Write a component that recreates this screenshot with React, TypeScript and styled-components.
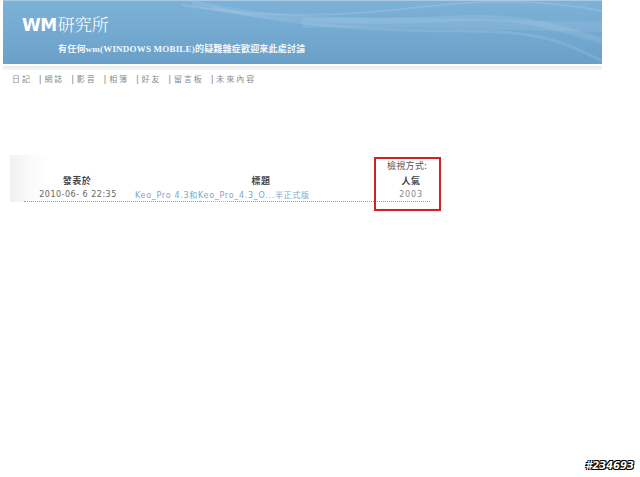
import * as React from 'react';
import styled, { createGlobalStyle } from 'styled-components';

const GlobalStyle = createGlobalStyle`
    html, body {
        margin: 0;
        padding: 0;
        background: #ffffff;
    }
    body {
        font-family: "DejaVu Sans", "Noto Sans CJK TC", sans-serif;
    }
`;

const Page = styled.div`
    position: relative;
    width: 640px;
    height: 477px;
    overflow: hidden;
    background: #ffffff;
`;

const Banner = styled.div`
    position: relative;
    margin-left: 3px;
    width: 599px;
    height: 63px;
    border-top: 1px solid #a9c9e2;
    background: linear-gradient(180deg, #7db2d8 0%, #74a9d0 50%, #6a9fc8 100%);
    overflow: hidden;
`;

const Waves = styled.svg`
    position: absolute;
    right: 0;
    top: 0;
`;

const BannerText = styled.div`
    position: relative;
    padding: 10px 0 0 19px;
    color: #ffffff;
`;

const Logo = styled.div`
    display: flex;
    align-items: baseline;
    height: 22px;
`;

const LogoMark = styled.span`
    font-family: "DejaVu Sans", sans-serif;
    font-weight: 900;
    font-size: 17px;
    letter-spacing: -0.5px;
`;

const LogoName = styled.span`
    font-family: "Noto Serif CJK TC", "Noto Sans CJK TC", serif;
    font-weight: 300;
    font-size: 17px;
    margin-left: 1px;
`;

const Slogan = styled.div`
    margin: 9px 0 0 36px;
    font-family: "Liberation Serif", "Noto Sans CJK TC", serif;
    font-weight: bold;
    font-size: 9px;
    letter-spacing: 0.2px;
    color: #f4f8fc;
`;

const Shade = styled.div`
    margin: 2px 0 0 3px;
    width: 599px;
    height: 4px;
    background: linear-gradient(180deg, #e6e8ea, #f8f8f8);
`;

const Nav = styled.nav`
    display: flex;
    padding: 3px 0 0 12px;
    font-family: "Noto Sans CJK TC", sans-serif;
    font-size: 8px;
    letter-spacing: 2px;
    color: #8a8a8a;
`;

const NavItem = styled.span<{ $first?: boolean }>`
    margin-right: 7px;
    &::before {
        content: ${p => (p.$first ? 'none' : '"|"')};
        margin-right: 1px;
        color: #888;
        font-weight: bold;
    }
`;

const Board = styled.div`
    position: relative;
    margin: 71px 0 0 10px;
    width: 430px;
    height: 47px;
    background: linear-gradient(90deg, #f1f1f1 0px, #fafafa 20px, #ffffff 40px);
`;

const ViewMode = styled.div`
    position: absolute;
    left: 377px;
    top: 4px;
    font-family: "Noto Sans CJK TC", sans-serif;
    font-size: 9px;
    letter-spacing: 0.3px;
    color: #555;
`;

const Rows = styled.div`
    position: absolute;
    left: 14px;
    top: 18px;
    width: 406px;
`;

const Row = styled.div<{ $line?: boolean }>`
    display: grid;
    grid-template-columns: 106px 262px 38px;
    height: 14px;
    align-items: center;
    border-bottom: ${p => (p.$line ? '1px dotted #9a9a9a' : 'none')};
`;

const HeadCell = styled.div`
    text-align: center;
    font-family: "Noto Sans CJK TC", sans-serif;
    font-weight: bold;
    font-size: 9px;
    color: #444;
    letter-spacing: 0.5px;
`;

const DateCell = styled.div`
    text-align: center;
    padding-left: 2px;
    font-family: "DejaVu Sans", sans-serif;
    font-size: 8px;
    letter-spacing: 0.5px;
    color: #666;
    white-space: nowrap;
`;

const TitleCell = styled.div`
    padding-left: 5px;
    font-family: "DejaVu Sans", "Noto Sans CJK TC", sans-serif;
    font-size: 8px;
    letter-spacing: 0.7px;
    color: #79a8c8;
    white-space: nowrap;
`;

const CountCell = styled.div`
    text-align: center;
    font-family: "DejaVu Sans", sans-serif;
    font-size: 8px;
    letter-spacing: 0.8px;
    color: #888;
`;

const Pager = styled.div`
    position: absolute;
    left: 190px;
    top: 46px;
    width: 30px;
    border-top: 1px dotted #b0b0b0;
`;

const Highlight = styled.div`
    position: absolute;
    left: 374px;
    top: 157px;
    width: 63px;
    height: 50px;
    border: 2px solid #d02028;
`;

const Stamp = styled.div`
    position: absolute;
    right: 6px;
    bottom: 6px;
    font-family: "DejaVu Sans", sans-serif;
    font-weight: bold;
    font-style: italic;
    font-size: 10px;
    color: #ffffff;
    text-shadow: -1px -1px 0 #000, 1px -1px 0 #000, -1px 1px 0 #000, 1px 1px 0 #000;
`;

const navItems = ['日記', '網誌', '影音', '相簿', '好友', '留言板', '未來內容'];

export default function App() {
    return (
        <Page>
            <GlobalStyle />
            <Banner>
                <Waves width="420" height="63" viewBox="0 0 420 63">
                    <path d="M0 4 C 80 18, 160 16, 240 6 S 380 2, 420 10" stroke="#a6c9e4" strokeWidth="2" fill="none" opacity="0.35" />
                    <path d="M10 2 C 90 20, 180 22, 260 18 S 360 22, 420 40" stroke="#b6d4ea" strokeWidth="6" fill="none" opacity="0.2" />
                    <path d="M30 6 C 110 26, 200 30, 280 30 S 380 40, 420 60" stroke="#a9cbe6" strokeWidth="3" fill="none" opacity="0.25" />
                    <path d="M120 22 C 200 20, 300 24, 420 26" stroke="#c4ddef" strokeWidth="10" fill="none" opacity="0.15" />
                </Waves>
                <BannerText>
                    <Logo>
                        <LogoMark>WM</LogoMark>
                        <LogoName>研究所</LogoName>
                    </Logo>
                    <Slogan>有任何wm(WINDOWS MOBILE)的疑難雜症歡迎來此處討論</Slogan>
                </BannerText>
            </Banner>
            <Shade />
            <Nav>
                {navItems.map((item, i) => (
                    <NavItem key={item} $first={i === 0}>{item}</NavItem>
                ))}
            </Nav>
            <Board>
                <ViewMode>檢視方式:</ViewMode>
                <Rows>
                    <Row>
                        <HeadCell>發表於</HeadCell>
                        <HeadCell>標題</HeadCell>
                        <HeadCell>人氣</HeadCell>
                    </Row>
                    <Row $line>
                        <DateCell>2010-06- 6 22:35</DateCell>
                        <TitleCell>Keo_Pro 4.3和Keo_Pro_4.3_O...半正式版</TitleCell>
                        <CountCell>2003</CountCell>
                    </Row>
                </Rows>
                <Pager />
            </Board>
            <Highlight />
            <Stamp>#234693</Stamp>
        </Page>
    );
}
